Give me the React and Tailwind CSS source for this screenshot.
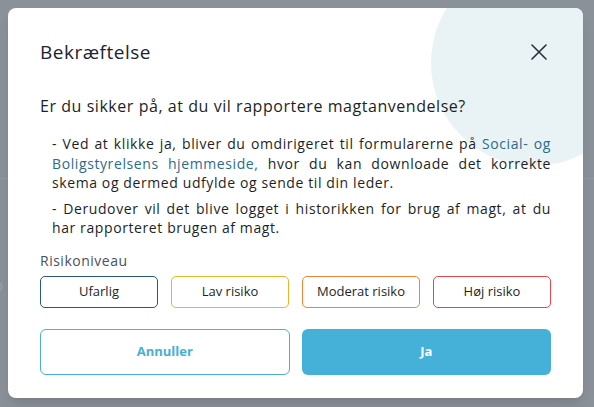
import React from 'react';

const risks = [
  { label: 'Ufarlig', border: 'border-[#245d72]' },
  { label: 'Lav risiko', border: 'border-[#efb327]' },
  { label: 'Moderat risiko', border: 'border-[#f0843a]' },
  { label: 'Høj risiko', border: 'border-[#e8444c]' },
];

export default function App() {
  return (
    <div className="relative h-[407px] w-[594px] overflow-hidden bg-[#8b9199] p-2 font-['Open_Sans',sans-serif]">
      {/* page behind the backdrop */}
      <div className="absolute left-0 top-[178px] h-px w-full bg-[#959aa2]" />
      <span className="absolute left-[-6px] top-[274px] text-[15px] text-[#9da2a9]">o</span>

      <div className="relative flex h-[390px] w-[575px] flex-col overflow-hidden rounded-lg bg-white px-8 shadow-lg">
        <div className="absolute left-[423px] top-[-48px] h-[206px] w-[206px] rounded-full bg-[#e9f2f4]" />

        <div className="relative flex items-center justify-between pt-[30px]">
          <h2 className="text-[19px] leading-7 font-medium tracking-[0.5px] text-[#1d2331]">Bekræftelse</h2>
          <button className="flex h-6 w-6 items-center justify-center text-[#2a2f3a]">
            <svg width="16" height="16" viewBox="0 0 16 16" fill="none" stroke="currentColor" strokeWidth="1.6" strokeLinecap="round">
              <path d="M1 1L15 15M15 1L1 15" />
            </svg>
          </button>
        </div>

        <p className="relative mt-7 text-[16px] leading-6 tracking-[0.55px] text-[#1c1f26]">
          Er du sikker på, at du vil rapportere magtanvendelse?
        </p>

        <div className="relative mt-4 pl-3 text-[14px] leading-[19.5px] tracking-[0.6px] text-[#1c1f26]">
          <p className="text-justify">
            - Ved at klikke ja, bliver du omdirigeret til formularerne på{' '}
            <a className="text-[#2a6c8c]">Social- og Boligstyrelsens hjemmeside,</a> hvor du kan downloade det
            korrekte skema og dermed udfylde og sende til din leder.
          </p>
          <p className="mt-[6px] text-justify">
            - Derudover vil det blive logget i historikken for brug af magt, at du har rapporteret brugen af magt.
          </p>
        </div>

        <div className="mt-[13px] text-[14px] leading-5 tracking-[0.5px] text-[#4a5060]">Risikoniveau</div>

        <div className="mt-[5px] grid grid-cols-4 gap-[13px]">
          {risks.map((r) => (
            <button
              key={r.label}
              className={`h-8 rounded-[5px] border bg-white text-[13px] text-[#1c1f26] ${r.border}`}
            >
              {r.label}
            </button>
          ))}
        </div>

        <div className="mt-[21px] grid grid-cols-2 gap-3">
          <button className="h-[46px] rounded-md border border-[#48b0d8] bg-white text-[13px] font-bold text-[#45b0d8]">
            Annuller
          </button>
          <button className="h-[46px] rounded-md bg-[#46b1d8] text-[13px] font-bold text-white">Ja</button>
        </div>
      </div>
    </div>
  );
}
